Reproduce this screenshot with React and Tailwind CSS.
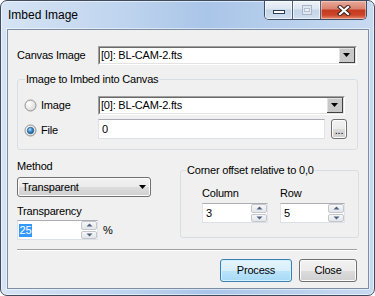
import React from "react";

function DownArrow({ className = "" }) {
  return (
    <svg width="7" height="4" viewBox="0 0 7 4" className={className}>
      <path d="M0 0 H7 L3.5 4 Z" fill="#000" />
    </svg>
  );
}

function SpinArrow({ up }) {
  return (
    <svg width="7" height="4" viewBox="0 0 7 4">
      <path d={up ? "M0.5 3.5 H6.5 L3.5 0.5 Z" : "M0.5 0.5 H6.5 L3.5 3.5 Z"} fill="#4d6185" />
    </svg>
  );
}

function Radio({ checked }) {
  return (
    <svg width="13" height="13" viewBox="0 0 13 13">
      <defs>
        <radialGradient id={checked ? "rbgc" : "rbgu"} cx="0.35" cy="0.35" r="0.8">
          <stop offset="0" stopColor="#ffffff" />
          <stop offset="1" stopColor="#d4d4d4" />
        </radialGradient>
        <radialGradient id="rdot" cx="0.4" cy="0.35" r="0.7">
          <stop offset="0" stopColor="#b6e2fb" />
          <stop offset="0.5" stopColor="#3b8ed0" />
          <stop offset="1" stopColor="#1a4f7d" />
        </radialGradient>
      </defs>
      <circle cx="6.5" cy="6.5" r="5.5" fill={checked ? "url(#rbgc)" : "url(#rbgu)"} stroke="#8e8f8f" />
      {checked && <circle cx="6.5" cy="6.5" r="3.2" fill="url(#rdot)" stroke="#2c5f8a" strokeWidth="0.8" />}
    </svg>
  );
}

function EditCombo({ className, value }) {
  return (
    <div className={`flex border border-[#a0a0a0] border-r-[#ffffff] border-b-[#ffffff] ${className}`}>
      <div className="flex flex-1 border border-[#696969] border-r-[#e3e3e3] border-b-[#e3e3e3] bg-white">
        <span className="flex flex-1 items-center pl-[1px]">{value}</span>
        <span className="flex w-[16px] items-center justify-center border-r border-b border-[#404040] bg-[#c8c8c8] shadow-[inset_1px_1px_0_#e3e3e3]">
          <DownArrow />
        </span>
      </div>
    </div>
  );
}

function SpinBox({ className, children }) {
  return (
    <div className={`flex h-[20px] border border-[#dbdfe6] border-t-[#abadb3] border-l-[#e2e3ea] border-r-[#e2e3ea] bg-white ${className}`}>
      <div className="flex flex-1 items-center pl-[1px]">{children}</div>
      <div className="flex w-[16px] flex-col gap-[1px] py-[0px]">
        <div className="flex flex-1 items-center justify-center rounded-[2px] border border-[#c3c6cc] bg-[linear-gradient(#f7f7f7,#e3e5e8)]">
          <SpinArrow up />
        </div>
        <div className="flex flex-1 items-center justify-center rounded-[2px] border border-[#c3c6cc] bg-[linear-gradient(#f7f7f7,#e3e5e8)]">
          <SpinArrow />
        </div>
      </div>
    </div>
  );
}

const grayBtn =
  "rounded-[3px] border border-[#707070] bg-[linear-gradient(#f2f2f2_0%,#ebebeb_50%,#dddddd_50%,#cfcfcf_100%)] shadow-[inset_0_0_0_1px_#fcfcfc]";

export default function App() {
  return (
    <div className="h-[296px] w-[375px] overflow-hidden rounded-[7px] border border-[#3f4c5e] bg-[linear-gradient(90deg,#d6e4f4_0%,#bdd3ee_35%,#a9c5e8_55%,#bad1ed_80%,#c8daf0_100%)] font-['Liberation_Sans',Arial,sans-serif] text-[11px] tracking-[-0.2px] text-black shadow-[inset_0_0_0_1px_rgba(255,255,255,0.55)]">
      {/* title bar */}
      <div className="flex h-[28px] items-start">
        <span className="mt-[7px] pl-[7px] text-[12px] leading-[14px] tracking-normal">Imbed Image</span>
        <div className="ml-auto mr-[7px] flex h-[19px] overflow-hidden rounded-b-[5px] border border-t-0 border-[#3e4e64]">
          <div className="flex w-[28px] items-center justify-center border-r border-[#4f6077] bg-[linear-gradient(#eef3fa_0%,#dbe5f1_45%,#c4d4e7_50%,#cfdff0_100%)] shadow-[inset_0_0_0_1px_rgba(255,255,255,0.6)]">
            <div className="mt-[4px] h-[4px] w-[12px] border border-[#2c3c52] bg-white" />
          </div>
          <div className="flex w-[28px] items-center justify-center border-r border-[#4f6077] bg-[linear-gradient(#eef3fa_0%,#dbe5f1_45%,#c4d4e7_50%,#cfdff0_100%)] shadow-[inset_0_0_0_1px_rgba(255,255,255,0.6)]">
            <div className="flex h-[10px] w-[10px] items-center justify-center border border-[#a9b6c6] bg-[#dfe7f1]">
              <div className="h-[4px] w-[6px] border border-[#b3c0cf] bg-[#eef2f7]" />
            </div>
          </div>
          <div className="flex w-[45px] items-center justify-center bg-[linear-gradient(#e9aa9c_0%,#d8806d_45%,#c43a21_50%,#cb4529_78%,#e58a6f_100%)] shadow-[inset_0_0_0_1px_rgba(255,220,210,0.5)]">
            <svg width="14" height="11" viewBox="0 0 14 11">
              <path d="M3 2 L11 9 M11 2 L3 9" stroke="#3b2320" strokeWidth="4.2" strokeLinecap="square" />
              <path d="M3 2 L11 9 M11 2 L3 9" stroke="#ffffff" strokeWidth="2.2" strokeLinecap="square" />
            </svg>
          </div>
        </div>
      </div>

      {/* client area */}
      <div className="ml-[6px] h-[260px] w-[362px] border border-[#7d8da2] bg-[#f0f0f0] pl-[9px] pt-[16px] shadow-[0_0_0_1px_rgba(255,255,255,0.5)]">
        <div className="flex h-[19px] items-center">
          <span className="w-[81px]">Canvas Image</span>
          <EditCombo className="h-[19px] w-[259px]" value="[0]: BL-CAM-2.fts" />
        </div>

        <fieldset className="mt-[8px] h-[77px] w-[341px] rounded-[3px] border border-[#d5dfe5]">
          <legend className="ml-[7px] px-[1px] leading-[13px]">Image to Imbed into Canvas</legend>
          <div className="mt-[10px] flex h-[19px] items-center">
            <div className="flex w-[80px] items-center pl-[6px]">
              <Radio />
              <span className="ml-[4px]">Image</span>
            </div>
            <EditCombo className="h-[19px] w-[247px]" value="[0]: BL-CAM-2.fts" />
          </div>
          <div className="mt-[4px] flex h-[20px] items-center">
            <div className="flex w-[80px] items-center pl-[6px] pt-[2px]">
              <Radio checked />
              <span className="ml-[4px]">File</span>
            </div>
            <div className="flex h-[20px] w-[227px] items-center border border-[#dbdfe6] border-t-[#abadb3] border-l-[#e2e3ea] border-r-[#e2e3ea] bg-white pl-[3px]">
              0
            </div>
            <div className={`ml-[6px] flex h-[20px] w-[16px] items-center justify-center pt-[3px] leading-none ${grayBtn}`}>
              ...
            </div>
          </div>
        </fieldset>

        <div className="flex">
          <div className="flex w-[134px] flex-col">
            <span className="mt-[10px] leading-[13px]">Method</span>
            <div className={`mt-[4px] flex h-[20px] items-center justify-between pl-[4px] pr-[4px] ${grayBtn}`}>
              <span>Transparent</span>
              <DownArrow />
            </div>
            <span className="mt-[8px] leading-[13px]">Transparency</span>
            <div className="mt-[2px] flex items-center">
              <SpinBox className="w-[81px]">
                <span className="bg-[#3399ff] px-[0.5px] leading-[13px] text-white">25</span>
              </SpinBox>
              <span className="ml-[5px]">%</span>
            </div>
          </div>

          <fieldset className="ml-[29px] mt-[14px] h-[74px] w-[179px] rounded-[3px] border border-[#d5dfe5]">
            <legend className="ml-[5px] px-[1px] leading-[13px]">Corner offset relative to 0,0</legend>
            <div className="flex gap-[12px] pl-[21px]">
              <div className="flex w-[66px] flex-col">
                <span className="mt-[10px] leading-[13px]">Column</span>
                <SpinBox className="mt-[3px] w-[66px]">
                  <span className="pl-[2px]">3</span>
                </SpinBox>
              </div>
              <div className="flex w-[65px] flex-col">
                <span className="mt-[10px] leading-[13px]">Row</span>
                <SpinBox className="mt-[3px] w-[65px]">
                  <span className="pl-[2px]">5</span>
                </SpinBox>
              </div>
            </div>
          </fieldset>
        </div>

        <div className="mt-[9px] h-[2px] w-[340px] border-t border-b border-t-[#a0a0a0] border-b-white" />

        <div className="mt-[8px] flex w-[340px] justify-end gap-[7px]">
          <button className="flex h-[23px] w-[72px] items-center justify-center rounded-[3px] border border-[#3c7fb1] bg-[linear-gradient(#e5f4fc_0%,#d7effc_50%,#bce5fc_50%,#a7d9f5_100%)] shadow-[inset_0_0_0_1px_#d6f1fe]">
            Process
          </button>
          <button className={`flex h-[23px] w-[58px] items-center justify-center ${grayBtn}`}>Close</button>
        </div>
      </div>
    </div>
  );
}
